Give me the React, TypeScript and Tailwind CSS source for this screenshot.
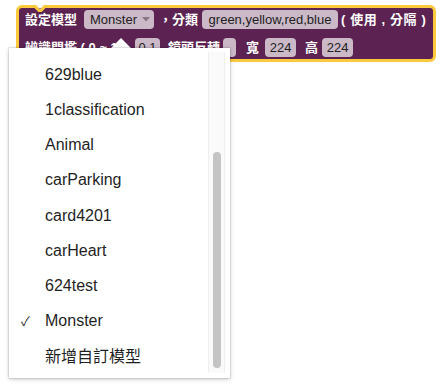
import React from "react";

const models = [
  "629blue",
  "1classification",
  "Animal",
  "carParking",
  "card4201",
  "carHeart",
  "624test",
  "Monster",
  "新增自訂模型",
];

function Field({ w, children }: { w: string; children?: React.ReactNode }) {
  return (
    <div
      className={`${w} h-full rounded-[4px] bg-[#cbb9c8] text-[#222] text-[13px] font-normal flex items-center justify-center`}
    >
      {children}
    </div>
  );
}

function Label({ className = "", children }: { className?: string; children: React.ReactNode }) {
  return <span className={`text-white text-[13px] font-bold whitespace-nowrap ${className}`}>{children}</span>;
}

export default function App() {
  const selected = "Monster";

  return (
    <div className="relative w-[444px] h-[389px] overflow-hidden bg-white font-['Liberation_Sans','Noto_Sans_CJK_TC',sans-serif]">
      {/* block */}
      <div className="relative ml-[16px] mt-[5px] w-[420px] h-[57px] rounded-[6px] border-[3px] border-[#fbc93d] bg-[#5c2352] pl-[6px] pt-[2px] flex flex-col gap-[9px]">
        <svg className="absolute -top-[3px] left-[12px]" width="18" height="8" viewBox="0 0 18 8">
          <path d="M0 1.5 L4 1.5 L8 5.5 L10 5.5 L14 1.5 L18 1.5" fill="none" stroke="#fbc93d" strokeWidth="3" />
          <path d="M1 0 L17 0 L13 0 L9.5 3.5 L8.5 3.5 L5 0 Z" fill="#ffffff" />
        </svg>

        <div className="h-[19px] flex items-center">
          <Label>設定模型</Label>
          <div className="ml-[7px] h-full">
            <div className="w-[70px] h-full rounded-[4px] bg-[#cbb9c8] text-[#222] text-[13px] flex items-center pl-[6px] gap-[5px]">
              <span>Monster</span>
              <svg width="8" height="5" viewBox="0 0 8 5">
                <path d="M0 0 L8 0 L4 4.5 Z" fill="#8a7587" />
              </svg>
            </div>
          </div>
          <Label className="ml-[5px]">，分類</Label>
          <div className="ml-[4px] h-full">
            <Field w="w-[136px]">green,yellow,red,blue</Field>
          </div>
          <Label className="ml-[3px] tracking-[0.6px]">( 使用 , 分隔 )</Label>
        </div>

        <div className="h-[19px] flex items-center">
          <Label className="w-[104px]">辨識門檻 ( 0 ~ 1 )</Label>
          <div className="ml-[6px] h-full">
            <Field w="w-[25px]">0.1</Field>
          </div>
          <Label className="ml-[8px]">鏡頭反轉</Label>
          <div className="ml-[3px] h-full">
            <Field w="w-[13px]" />
          </div>
          <Label className="ml-[10px]">寬</Label>
          <div className="ml-[6px] h-full">
            <Field w="w-[31px]">224</Field>
          </div>
          <Label className="ml-[9px]">高</Label>
          <div className="ml-[4px] h-full">
            <Field w="w-[31px]">224</Field>
          </div>
        </div>
      </div>

      {/* dropdown */}
      <div className="absolute left-[114px] top-[41px] w-[14px] h-[14px] rotate-45 bg-white" />
      <div className="absolute left-[9px] top-[48px] w-[221px] h-[330px] bg-white shadow-[0_0_0_1px_rgba(0,0,0,0.06),0_1px_4px_rgba(0,0,0,0.25)] pt-[9px]">
        {models.map((m) => (
          <div key={m} className="relative h-[35.25px] flex items-center pl-[36px] text-[16px] text-[#1f1f1f]">
            {m === selected && (
              <span className="absolute left-[12px] text-[13px] text-[#333]">✓</span>
            )}
            {m}
          </div>
        ))}
        <div className="absolute top-[4px] bottom-[5px] right-[5px] w-[17px] bg-[#fafafa] border-x border-[#efefef]">
          <div className="absolute left-[4px] top-[100px] w-[8px] h-[216px] rounded-full bg-[#c4c4c4]" />
        </div>
      </div>
    </div>
  );
}
